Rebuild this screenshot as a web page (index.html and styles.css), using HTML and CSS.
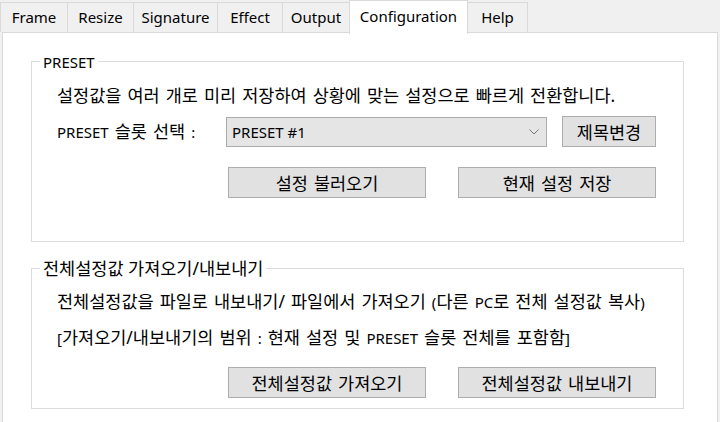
FILE: index.html
```html
<!DOCTYPE html>
<html lang="ko">
<head>
<meta charset="utf-8">
<link rel="stylesheet" href="styles.css">
</head>
<body>
<div class="tabs">
  <div class="tab t-frame">Frame</div>
  <div class="tab t-resize">Resize</div>
  <div class="tab t-sign">Signature</div>
  <div class="tab t-effect">Effect</div>
  <div class="tab t-output">Output</div>
  <div class="tab t-config active">Configuration</div>
  <div class="tab t-help">Help</div>
</div>
<div class="panel">
  <fieldset class="group g1">
    <legend><span class="lat">PRESET</span></legend>
    <div class="inner">
      <p class="line desc">설정값을 여러 개로 미리 저장하여 상황에 맞는 설정으로 빠르게 전환합니다.</p>
      <div class="row slot">
        <span class="label"><span class="lat">PRESET</span> 슬롯 선택 <span class="lat">:</span></span>
        <div class="combo">
          <span class="lat">PRESET #1</span>
          <svg class="chev" width="10" height="6" viewBox="0 0 10 6"><path d="M0.5 0.5 L5 5 L9.5 0.5" fill="none" stroke="#777" stroke-width="1"/></svg>
        </div>
        <button class="btn small">제목변경</button>
      </div>
      <div class="row actions">
        <button class="btn wide">설정 불러오기</button>
        <button class="btn wide">현재 설정 저장</button>
      </div>
    </div>
  </fieldset>
  <fieldset class="group g2">
    <legend>전체설정값 가져오기/내보내기</legend>
    <div class="inner">
      <p class="line l1">전체설정값을 파일로 내보내기/ 파일에서 가져오기 <span class="lat">(</span>다른 <span class="lat">PC</span>로 전체 설정값 복사<span class="lat">)</span></p>
      <p class="line l2"><span class="lat">[</span>가져오기/내보내기의 범위 <span class="lat">:</span> 현재 설정 및 <span class="lat">PRESET</span> 슬롯 전체를 포함함<span class="lat">]</span></p>
      <div class="row actions">
        <button class="btn wide">전체설정값 가져오기</button>
        <button class="btn wide">전체설정값 내보내기</button>
      </div>
    </div>
  </fieldset>
</div>
</body>
</html>
```
FILE: styles.css
```css
* { box-sizing: border-box; }
html, body {
  margin: 0;
  padding: 0;
  background: #f0f0f0;
  width: 720px;
  height: 422px;
  overflow: hidden;
  font-family: "Noto Sans", "Noto Sans CJK KR", sans-serif;
  font-size: 17.5px;
  color: #000;
}
.lat { font-size: 15px; }
.tabs {
  display: flex;
  align-items: flex-end;
  height: 33px;
  position: relative;
  z-index: 2;
}
.tab {
  height: 30px;
  line-height: 28px;
  text-align: center;
  font-size: 15px;
  border: 1px solid #d9d9d9;
  border-bottom: none;
  margin-right: -1px;
  background: #f0f0f0;
  margin-bottom: 1px;
}
.t-frame { width: 68px; }
.t-resize { width: 67px; }
.t-sign { width: 85px; }
.t-effect { width: 66px; }
.t-output { width: 68px; }
.t-config { width: 119px; }
.t-help { width: 61px; }
.tab.active {
  height: 34px;
  line-height: 30px;
  background: #fff;
  margin-bottom: -1px;
  position: relative;
  z-index: 3;
}
.panel {
  margin-top: -1px;
  margin-left: 2px;
  width: 716px;
  height: 390px;
  background: #fff;
  border: 1px solid #d9d9d9;
  border-bottom: none;
  padding: 18px 33px 0 28px;
}
.group {
  margin: 0;
  padding: 0;
  border: 1px solid #dcdcdc;
  min-width: 0;
}
.group legend {
  margin-left: 8px;
  padding: 0 3px;
  line-height: 20px;
  height: 20px;
}
.inner {
  padding-left: 25px;
}
.line {
  margin: 0;
  line-height: 20px;
  word-spacing: 1.5px;
  white-space: nowrap;
}
.g1 .inner { padding-top: 14px; padding-bottom: 43px; }
.g2 { margin-top: 16px; }
.g2 .inner { padding-top: 13px; padding-bottom: 10px; }
.g2 .l2 { margin-top: 15px; }
.row {
  display: flex;
  align-items: center;
}
.slot { margin-top: 11px; height: 31px; }
.label {
  width: 169px;
  line-height: 20px;
  word-spacing: 1.5px;
  white-space: nowrap;
}
.combo {
  width: 321px;
  height: 30px;
  background: #e5e5e5;
  border: 1px solid #acacac;
  display: flex;
  align-items: center;
  justify-content: space-between;
  padding: 0 7px 0 5px;
}
.btn {
  font: inherit;
  color: #000;
  background: #e1e1e1;
  border: 1px solid #adadad;
  border-radius: 0;
  padding: 0;
  height: 31px;
  line-height: 20px;
  word-spacing: 1.5px;
  white-space: nowrap;
}
.btn.small { width: 94px; margin-left: 15px; }
.actions { margin-top: 20px; padding-left: 171px; gap: 32px; }
.g2 .actions { margin-top: 19px; }
.btn.wide { width: 198px; }
```
